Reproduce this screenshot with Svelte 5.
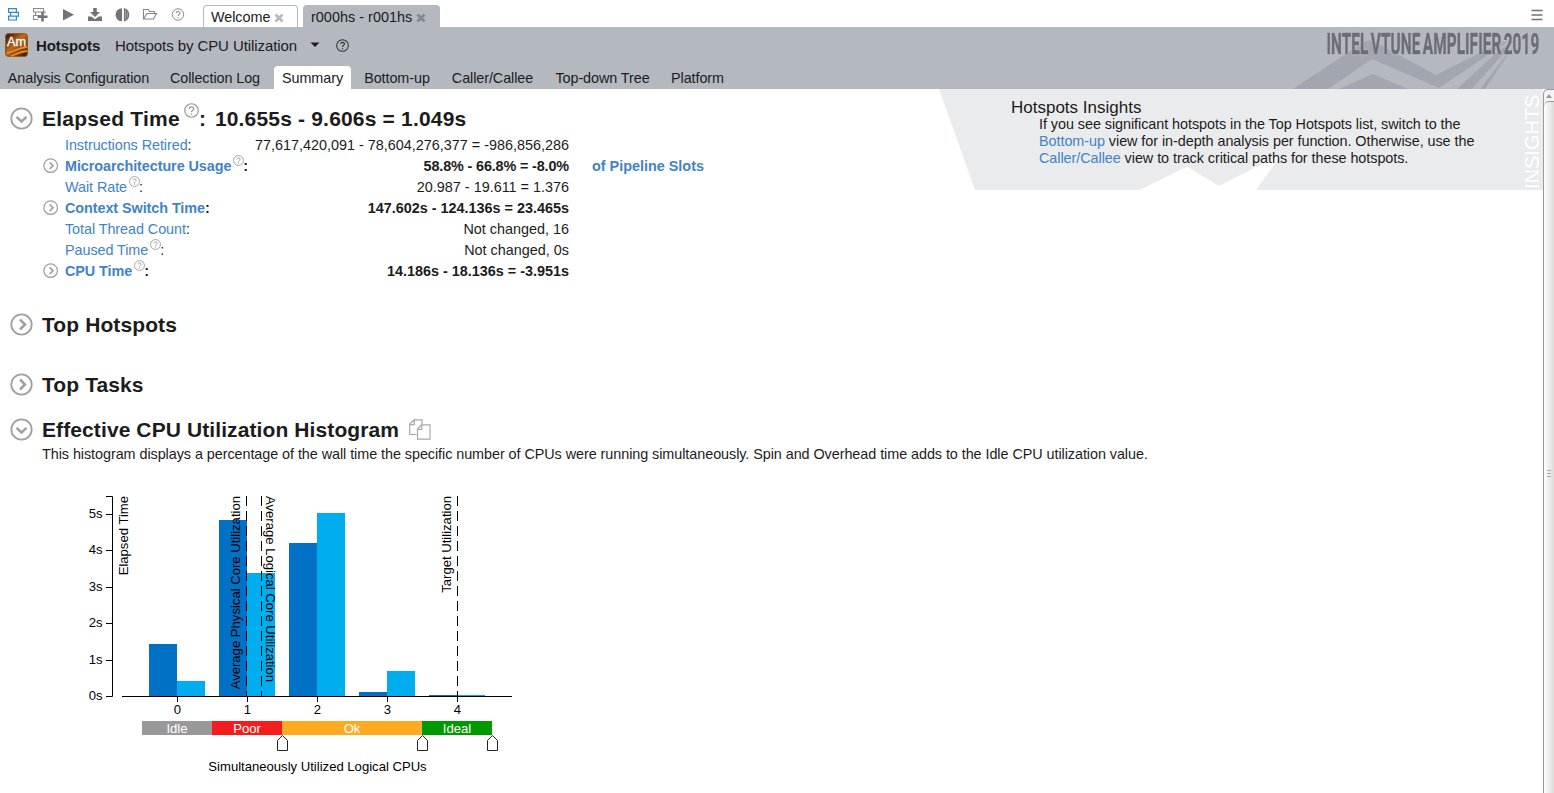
<script>
  const metrics = [
    { label: 'Instructions Retired', value: '77,617,420,091 - 78,604,276,377 = -986,856,286' },
    { label: 'Microarchitecture Usage', value: '58.8% - 66.8% = -8.0%', unit: 'of Pipeline Slots', bold: true, help: true, tight: true },
    { label: 'Wait Rate', value: '20.987 - 19.611 = 1.376', help: true },
    { label: 'Context Switch Time', value: '147.602s - 124.136s = 23.465s', bold: true },
    { label: 'Total Thread Count', value: 'Not changed, 16' },
    { label: 'Paused Time', value: 'Not changed, 0s', help: true },
    { label: 'CPU Time', value: '14.186s - 18.136s = -3.951s', bold: true, help: true }
  ];
  const tabs = [
    { name: 'Analysis Configuration', w: 155 },
    { name: 'Collection Log', w: 108 },
    { name: 'Summary', w: 77, active: true },
    { name: 'Bottom-up', w: 82 },
    { name: 'Caller/Callee', w: 99 },
    { name: 'Top-down Tree', w: 111 },
    { name: 'Platform', w: 69 }
  ];
  const ticks = [
    { y: 30.5, t: '5s' }, { y: 66.5, t: '4s' }, { y: 103.5, t: '3s' },
    { y: 139.5, t: '2s' }, { y: 176.5, t: '1s' }, { y: 212.5, t: '0s' }
  ];
  const bars = [
    [149, 160, 177, 197], [219, 36, 247, 89], [289, 59, 317, 29], [359, 208, 387, 187], [429, 211, 457, 211]
  ];
  const bands = [
    { t: 'Idle', x: 142, w: 70, c: '#999999' }, { t: 'Poor', x: 212, w: 70, c: '#f41c1c' },
    { t: 'Ok', x: 282, w: 140, c: '#fdab23' }, { t: 'Ideal', x: 422, w: 70, c: '#009900' }
  ];
</script>

{#snippet help(size, color)}
  <svg width={size} height={size} viewBox="0 0 14 14" fill="none" stroke={color}>
    <circle cx="7" cy="7" r="6.3" stroke-width="1.1" />
    <path d="M5 5.5C5 3.1 9.1 3.1 9.1 5.4C9.1 6.8 7 6.8 7 8.6M7 9.7V11" stroke-width="1.2" />
  </svg>
{/snippet}

{#snippet toggle(size, open)}
  <svg width={size} height={size} viewBox="0 0 24 24" fill="none" stroke="#a0a0a0">
    <circle cx="11.5" cy="11.5" r="10.2" stroke-width="1.8" />
    {#if open}
      <path d="M6.5 9.8L11.5 14.5L16.5 9.8" stroke-width="2.5" />
    {:else}
      <path d="M10 6.500L15 11.500L10 16.500" stroke-width="2.5" />
    {/if}
  </svg>
{/snippet}

<div class="app">
  <div class="topbar">
    <div class="tools">
      <svg width="190" height="27" viewBox="0 0 190 27" fill="none">
        <g stroke="#2f86d2" stroke-width="1.2">
          <path d="M8.6 8.6H16.4V12.4H8.6ZM10.6 12.4H18.4V16.2H10.6ZM8.6 16.2H16.4V20H8.6Z" />
        </g>
        <g stroke="#8a8a8a" stroke-width="1.1">
          <path d="M41 12H33.500V8.500H43.500V12M41 15.500H35.500V12H45V13.500M38 19.500H33.500V15.500H39" />
        </g>
        <path d="M42.500 12V21.500M37.500 16.800H47.500" stroke="#747474" stroke-width="2.6" />
        <path d="M63 9V20.5L74 14.7Z" fill="#747474" />
        <path d="M93.2 8H96.8V12H100L95 17L90 12H93.2Z" fill="#747474" />
        <path d="M88 16.5H91.3L95 19.2L98.7 16.5H102V21H88Z" fill="#747474" />
        <path d="M122 8.3A6.5 6.5 0 0 0 122 21.3Z" fill="#747474" />
        <path d="M124.5 8.8A6.4 6.4 0 0 1 124.5 20.8Z" fill="#bbb" stroke="#747474" stroke-width="1.2" />
        <path d="M126.6 10V19.5" stroke="#747474" stroke-width="1.6" />
        <path d="M143.5 19V9.5H148.2L149.5 11.5H154.5V13.5M143.5 19L147 13.5H156.5L153.4 19Z" stroke="#858585" stroke-width="1.1" />
        <circle cx="178" cy="14.5" r="5.7" stroke="#888" />
        <path d="M176.2 13.2C176.2 11 180 11 180 13.1C180 14.4 178 14.4 178 16M178 17V18.1" stroke="#888" stroke-width="1.1" />
      </svg>
    </div>
    <div class="doc">Welcome<svg width="10" height="10" viewBox="0 0 10 10"><path d="M1.5 1.5L8.5 8.5M8.5 1.5L1.5 8.5" stroke="#b9b9b9" stroke-width="2.7" /></svg></div>
    <div class="doc current">r000hs - r001hs<svg width="10" height="10" viewBox="0 0 10 10"><path d="M1.5 1.5L8.5 8.5M8.5 1.5L1.5 8.5" stroke="#85888b" stroke-width="2.7" /></svg></div>
    <svg class="burger" width="12" height="12" viewBox="0 0 12 12"><path d="M.5 1.500H11.500M.5 6H11.500M.5 10.500H11.500" stroke="#707070" stroke-width="1.5" /></svg>
  </div>

  <header>
    <svg class="peaks" width="264" height="62" viewBox="-10 0 264 62">
      <g fill="#a2a6ae">
        <path d="M-7 62L61 17Q68 11 75 15L136 48L194 19L212 12L139 61L72 32L28 62Z" />
        <path d="M39 62L73 47L108 62Z" />
        <path d="M157 62L196 26L216 12L172 62ZM180 62L217 14L185 62Z" />
      </g>
    </svg>
    <svg class="logo" width="254" height="40" viewBox="0 0 254 40">
      <text class="brand" transform="translate(26.5 27) scale(.52 1)" textLength="409">INTEL VTUNE AMPLIFIER 2019</text>
    </svg>
    <div class="title">
      <svg width="24" height="24" viewBox="0 0 24 24">
        <defs><linearGradient id="am" x1="0" y1="0" x2="1" y2="1"><stop offset="0" stop-color="#201008" /><stop offset=".45" stop-color="#c06a1c" /><stop offset="1" stop-color="#2a1204" /></linearGradient></defs>
        <rect x=".5" y=".5" width="22" height="23" rx="3" fill="url(#am)" stroke="#9a581c" />
        <path d="M2 20C10 19 12 15 22 14M6 23C12 21 14 18.500 22 18" fill="none" stroke="#f08a1c" stroke-width="1.8" />
        <text x="2" y="13" class="am" textLength="19" lengthAdjust="spacingAndGlyphs">Am</text>
      </svg>
      <b>Hotspots</b>
      <span class="view">Hotspots by CPU Utilization</span>
      <svg class="caret" width="10" height="6" viewBox="0 0 10 6"><path d="M.5 .5H9.5L5 5Z" fill="#1c1c1c" /></svg>
      {@render help(13, '#333')}
    </div>
    <nav>
      {#each tabs as tab}
        <span class:active={tab.active} style:width="{tab.w}px">{tab.name}</span>
      {/each}
    </nav>
  </header>

  <div class="body">
    <main>
      <aside>
        <svg class="shape" width="604" height="101" viewBox="0 0 604 101">
          <path d="M0 0H604V101H36Z" fill="#eaebed" />
          <path d="M201 101L248 77.500L280 97L343 65L317 101Z" fill="#fff" />
        </svg>
        <div class="tip">
          <h3>Hotspots Insights</h3>
          <p>If you see significant hotspots in the Top Hotspots list, switch to the<br /><a>Bottom-up</a> view for in-depth analysis per function. Otherwise, use the<br /><a>Caller/Callee</a> view to track critical paths for these hotspots.</p>
        </div>
        <span class="side">INSIGHTS</span>
      </aside>

      <h2 class="elapsed">{@render toggle(24, true)}<span>Elapsed Time</span><i>{@render help(15, '#999')}</i><span class="colon">:</span><span class="total">10.655s - 9.606s = 1.049s</span></h2>
      <div class="metrics">
        {#each metrics as m}
          <div class="row" class:bold={m.bold}>
            <span class="tog">{#if m.bold}{@render toggle(16, false)}{/if}</span>
            <span class="label"><a>{m.label}</a>{#if m.help}<i>{@render help(11, '#999')}</i>{/if}:</span>
            <span class="value" class:tight={m.tight}>{m.value}</span>
            <a class="unit">{m.unit ?? ''}</a>
          </div>
        {/each}
      </div>
      <h2 class="hot">{@render toggle(24, false)}<span>Top Hotspots</span></h2>
      <h2 class="tasks">{@render toggle(24, false)}<span>Top Tasks</span></h2>
      <h2 class="hist">{@render toggle(24, true)}<span>Effective CPU Utilization Histogram</span>
        <svg class="copy" width="22" height="22" viewBox="0 0 22 22" fill="none" stroke="#a8a8a8" stroke-width="1.2">
          <path d="M7.500 15.500H.7V5.300L5 .8H13V5M.7 5.600H5.300V.8M8.500 20.200V9.800L12.300 5.800H21V20.200ZM8.500 10.300H12.700V5.800" />
        </svg>
      </h2>
      <p class="desc">This histogram displays a percentage of the wall time the specific number of CPUs were running simultaneously. Spin and Overhead time adds to the Idle CPU utilization value.</p>

      <svg class="chart" width="540" height="309" viewBox="0 0 540 309">
        {#each bars as b}
          <rect x={b[0]} y={b[1]} width="28" height={212 - b[1]} fill="#0071c5" />
          <rect x={b[2]} y={b[3]} width="28" height={212 - b[3]} fill="#00aeef" />
        {/each}
        <path d="M106 12.500H112.500V212.500H106M122 212.500H512" fill="none" stroke="#000" />
        {#each ticks as t}
          <path d="M106 {t.y}H112" stroke="#000" />
          <text x="102.500" y={t.y + 3.4} text-anchor="end">{t.t}</text>
        {/each}
        {#each [0, 1, 2, 3, 4] as n}
          <path d="M{177.5 + n * 70} 212V218" stroke="#000" />
          <text x={177.5 + n * 70} y="230" text-anchor="middle">{n}</text>
        {/each}
        <path d="M246.500 12V212M261.500 12V212M457.500 12V212" stroke="#000" stroke-dasharray="10 5" />
        <text transform="translate(128 12) rotate(-90)" text-anchor="end">Elapsed Time</text>
        <text transform="translate(240 12) rotate(-90)" text-anchor="end">Average Physical Core Utilization</text>
        <text transform="translate(266 12) rotate(90)">Average Logical Core Utilization</text>
        <text transform="translate(451 12) rotate(-90)" text-anchor="end">Target Utilization</text>
        {#each bands as b}
          <rect x={b.x} y="237" width={b.w} height="14" fill={b.c} />
          <text x={b.x + b.w / 2} y="249" text-anchor="middle" class="white">{b.t}</text>
        {/each}
        {#each [282.5, 422.5, 492.5] as x}
          <path d="M{x} 251.500L{x + 5} 256.500V266.500H{x - 5}V256.500Z" fill="#fff" stroke="#222" />
        {/each}
        <text x="317.500" y="287" text-anchor="middle">Simultaneously Utilized Logical CPUs</text>
      </svg>
    </main>
    <div class="scroll">
      <div class="up"><svg width="6" height="4" viewBox="0 0 6 4"><path d="M0 4L3 0L6 4Z" fill="#999" /></svg></div>
      <div class="thumb"><svg width="4" height="9" viewBox="0 0 4 9"><path d="M0 1.500H4M0 4.500H4M0 7.500H4" stroke="#aaa" /></svg></div>
    </div>
  </div>
</div>

<style>
  :global(body) { margin: 0; overflow: hidden; }
  .app { width: 1554px; height: 793px; overflow: hidden; background: #fff; color: #1c1c1c; font: 14.4px/17px "Liberation Sans", Arial, sans-serif; display: flex; flex-direction: column; }
  svg { display: block; flex: none; }
  .topbar { height: 27px; display: flex; align-items: flex-end; }
  .tools { width: 203px; }
  .doc { box-sizing: border-box; height: 22px; width: 95px; margin-right: 5px; padding: 0 7px; border: 1px solid #b4b8bf; border-bottom: 0; border-radius: 4px 4px 0 0; display: flex; align-items: center; gap: 4px; line-height: 22px; letter-spacing: -.05px; white-space: nowrap; }
  .doc svg { margin-top: 3px; }
  .current { width: 137px; background: #b4b8bf; letter-spacing: .03px; }
  .burger { margin: 0 11px 6px auto; }
  header { height: 62px; background: #b4b8bf; position: relative; display: flex; flex-direction: column; justify-content: space-between; }
  .peaks, .logo { position: absolute; right: 0; top: 0; }
  .logo { overflow: visible; }
  .brand { font: 700 29.5px Roboto, "Liberation Sans", sans-serif; fill: #6b6e74; stroke: #6b6e74; stroke-width: .6px; word-spacing: -3px; filter: drop-shadow(0 0 1px #d0d3d8); }
  .title { display: flex; align-items: center; height: 24px; padding: 6px 0 0 5px; font-size: 15px; }
  .title b { margin-left: 7px; width: 79px; letter-spacing: -.1px; }
  .view { width: 195px; letter-spacing: -.08px; }
  .caret { margin-right: 16px; }
  .am { font-size: 12.5px; fill: #fff; stroke: #fff; stroke-width: .3px; }
  nav { display: flex; gap: 5px; padding-left: 1px; }
  nav span { height: 23px; line-height: 24px; text-align: center; white-space: nowrap; border-radius: 4px 4px 0 0; letter-spacing: -.08px; }
  nav .active { background: #fff; }
  .body { display: flex; height: 704px; }
  main { width: 1543px; position: relative; }
  aside { position: absolute; right: 0; top: 0; width: 604px; height: 101px; }
  .shape, .tip { position: absolute; left: 0; top: 0; }
  .tip { padding: 10px 0 0 72px; white-space: nowrap; }
  h3 { margin: 0; font-size: 17px; font-weight: normal; line-height: 17px; }
  .tip p { margin: 0 0 0 28px; letter-spacing: -.055px; }
  a { color: #4183c7; }
  .side { position: absolute; right: 0; top: 2px; height: 98px; writing-mode: vertical-rl; transform: rotate(180deg); color: #fff; font-size: 20px; line-height: 22px; }
  h2 { margin: 0; padding-left: 10px; height: 24px; display: flex; align-items: center; font-size: 21px; line-height: 24px; letter-spacing: .1px; white-space: pre; }
  h2 > span { margin-left: 8px; }
  i { font-style: normal; }
  h2 i { align-self: flex-start; margin: -4px 0 0 4px; }
  .elapsed { margin-top: 18px; letter-spacing: .24px; }
  .elapsed .colon { margin-left: 0; width: 16px; }
  .elapsed .total { margin-left: 0; letter-spacing: .18px; }
  .metrics { padding: 4px 0 0 43px; }
  .row { display: grid; grid-template-columns: 22px 184px 320px 1fr; height: 21px; align-items: center; white-space: nowrap; }
  .tog { margin-top: -1px; }
  .bold { font-weight: bold; }
  .label { display: flex; letter-spacing: -.07px; }
  .row i { margin: -3px -1px 0 2px; }
  .value { text-align: right; }
  .tight { letter-spacing: -.14px; }
  .unit { padding-left: 23px; }
  .hot { margin-top: 31px; }
  .tasks { margin-top: 36px; }
  .hist { margin-top: 21px; }
  .copy { margin-left: 10px; }
  .desc { margin: 4px 0 0 42px; white-space: nowrap; letter-spacing: -.061px; }
  .chart { margin-top: 21px; font-size: 13.1px; }
  .chart .white { fill: #fff; }
  .scroll { box-sizing: border-box; width: 11px; border-left: 1px solid #999; border-top: 1px solid #999; border-radius: 5px 0 0 0; background: #f4f4f3; display: flex; flex-direction: column; }
  .up { height: 11px; display: flex; align-items: center; justify-content: center; }
  .thumb { flex: 1; border-top: 1px solid #999; border-radius: 5px 0 0 0; background: linear-gradient(90deg, #fff, #dddcda); display: flex; align-items: center; justify-content: center; padding-top: 51px; }
</style>
